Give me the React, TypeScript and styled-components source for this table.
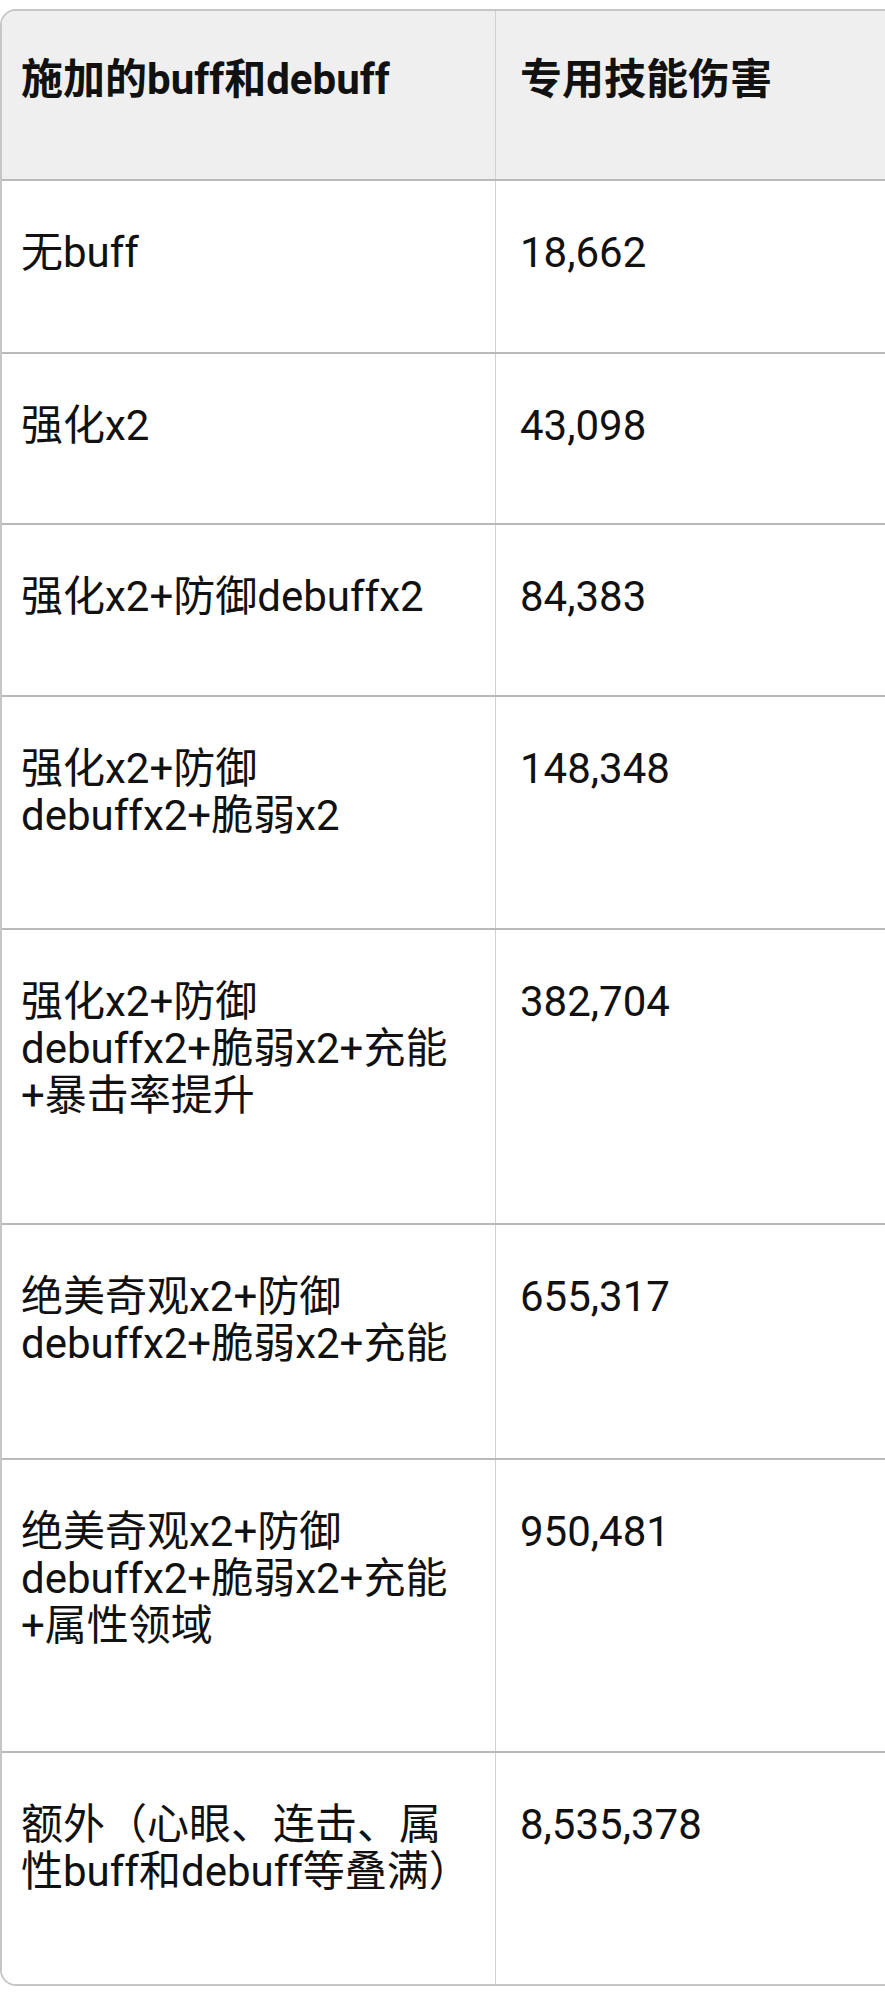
import React from "react";
import styled, { createGlobalStyle } from "styled-components";

const GlobalStyle = createGlobalStyle`
  html, body {
    margin: 0;
    padding: 0;
    background: #ffffff;
    overflow: hidden;
  }
  body {
    font-family: Roboto, "Noto Sans CJK SC", "Noto Sans", sans-serif;
    color: #111111;
  }
`;

const Page = styled.div`
  width: 885px;
  padding-top: 9px;
  overflow: hidden;
`;

const Table = styled.div`
  width: 930px;
  border: 2px solid #c6c6c6;
  border-radius: 16px;
  overflow: hidden;
  background: #ffffff;
`;

const Row = styled.div<{ $h: number; $head?: boolean }>`
  display: grid;
  grid-template-columns: 493px 1fr;
  height: ${(p) => p.$h}px;
  box-sizing: border-box;
  background: ${(p) => (p.$head ? "#efefef" : "#ffffff")};
  border-top: ${(p) => (p.$head ? "none" : "2px solid #b9b9b9")};
`;

const Cell = styled.div<{ $head?: boolean; $second?: boolean }>`
  box-sizing: border-box;
  font-size: 42px;
  line-height: 47px;
  font-weight: ${(p) => (p.$head ? 700 : 400)};
  padding: ${(p) => (p.$head ? "45px" : "48px")} 20px 0
    ${(p) => (p.$second ? "24px" : "19px")};
  border-left: ${(p) => (p.$second ? "1px solid #d2d2d2" : "none")};
`;

type Entry = { buff: string; dmg: string; h: number };

const rows: Entry[] = [
  { buff: "无buff", dmg: "18,662", h: 173 },
  { buff: "强化x2", dmg: "43,098", h: 171 },
  { buff: "强化x2+防御debuffx2", dmg: "84,383", h: 172 },
  { buff: "强化x2+防御debuffx2+脆弱x2", dmg: "148,348", h: 233 },
  {
    buff: "强化x2+防御debuffx2+脆弱x2+充能+暴击率提升",
    dmg: "382,704",
    h: 295,
  },
  { buff: "绝美奇观x2+防御debuffx2+脆弱x2+充能", dmg: "655,317", h: 235 },
  {
    buff: "绝美奇观x2+防御debuffx2+脆弱x2+充能+属性领域",
    dmg: "950,481",
    h: 293,
  },
  {
    buff: "额外（心眼、连击、属性buff和debuff等叠满）",
    dmg: "8,535,378",
    h: 233,
  },
];

export default function App() {
  return (
    <>
      <GlobalStyle />
      <Page>
        <Table>
          <Row $h={168} $head>
            <Cell $head>施加的buff和debuff</Cell>
            <Cell $head $second>
              专用技能伤害
            </Cell>
          </Row>
          {rows.map((r) => (
            <Row key={r.dmg} $h={r.h}>
              <Cell>{r.buff}</Cell>
              <Cell $second>{r.dmg}</Cell>
            </Row>
          ))}
        </Table>
      </Page>
    </>
  );
}
